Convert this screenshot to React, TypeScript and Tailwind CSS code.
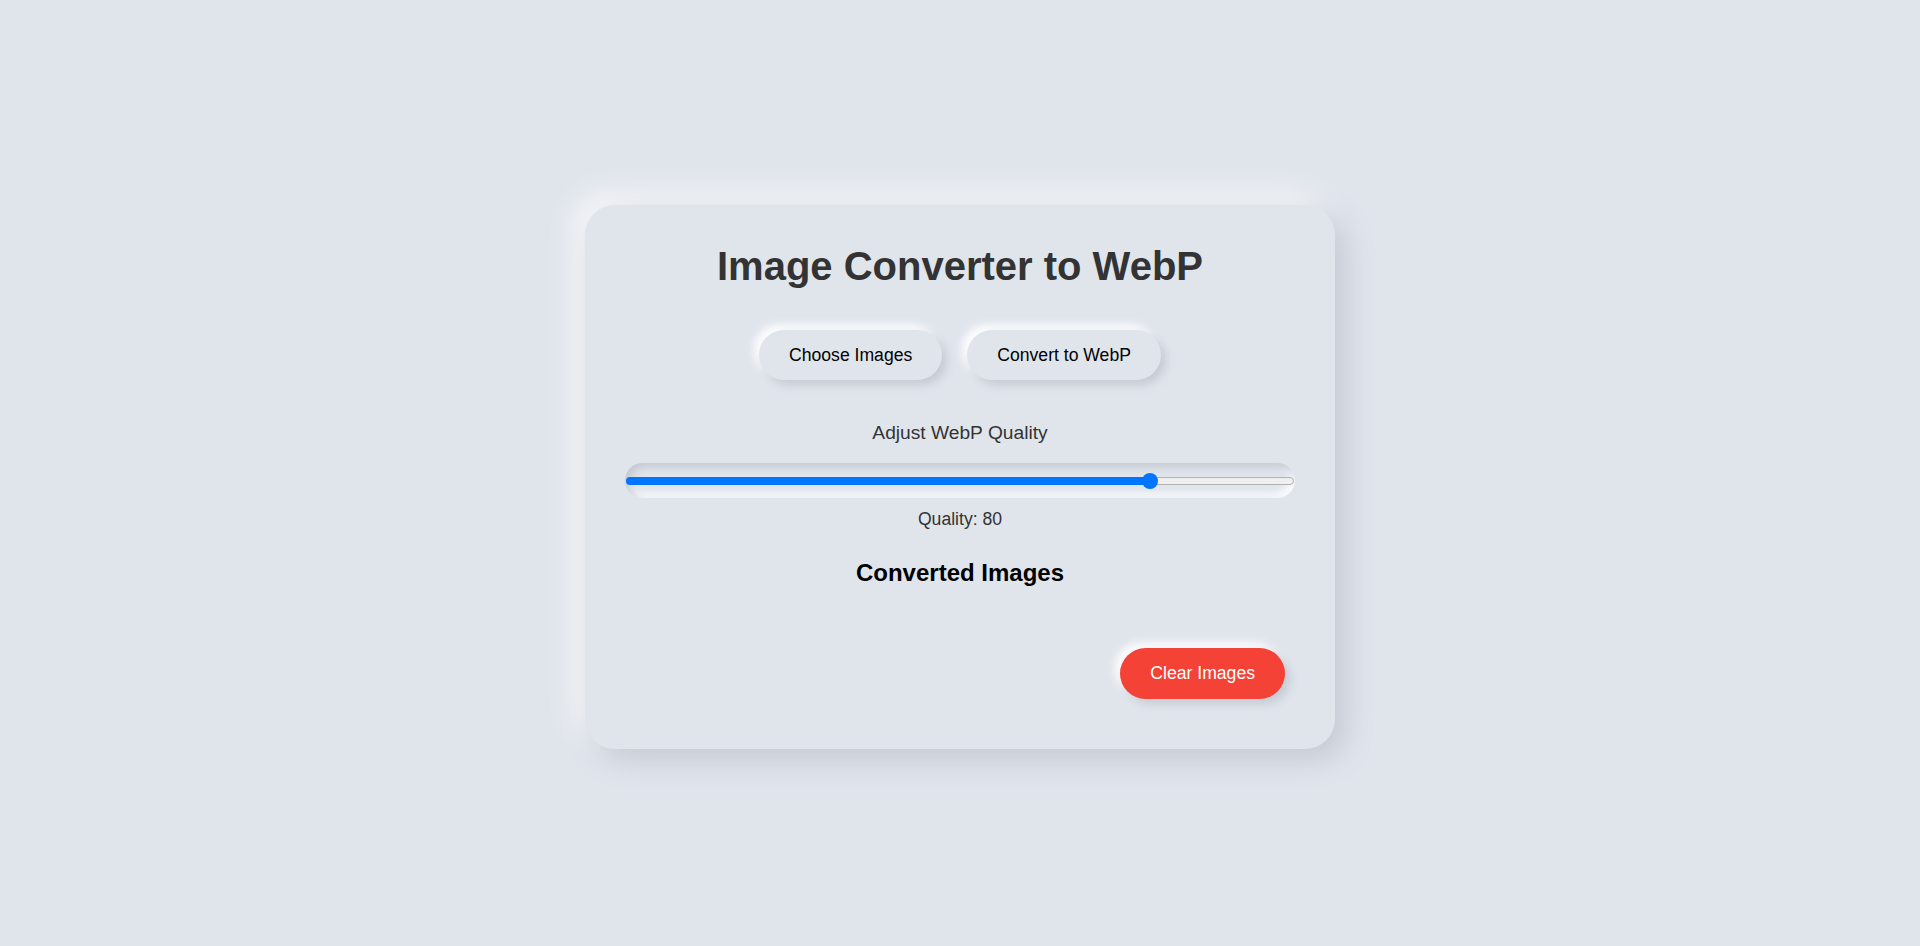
import { useState } from "react";

const App = () => {
  const [quality] = useState(80);

  return (
    <div className="min-h-screen w-full flex items-center justify-center bg-[#e0e5ec] font-['Liberation_Sans',Arial,sans-serif]">
      <div className="mt-[8px] w-[750px] rounded-[30px] bg-[#e0e5ec] px-[40px] pt-[40px] pb-[40px] text-center shadow-[10px_10px_30px_#c3c8d1,-10px_-10px_30px_rgba(255,255,255,0.85)]">
        {/* Title */}
        <h1 className="text-[40px] leading-[42px] font-bold text-[#333]">
          Image Converter to WebP
        </h1>

        {/* Action buttons */}
        <div className="mt-[43px] flex justify-center gap-[25px]">
          <button className="h-[50px] rounded-full bg-[#e0e5ec] px-[30px] text-[17.6px] text-black shadow-[5px_5px_10px_#c6cbd3,-5px_-5px_10px_#ffffff]">
            Choose Images
          </button>
          <button className="h-[50px] rounded-full bg-[#e0e5ec] px-[30px] text-[17.6px] text-black shadow-[5px_5px_10px_#c6cbd3,-5px_-5px_10px_#ffffff]">
            Convert to WebP
          </button>
        </div>

        {/* Quality */}
        <p className="mt-[43px] text-[19.2px] leading-[20px] text-[#333]">
          Adjust WebP Quality
        </p>
        <div className="relative mt-[20px] h-[35px] rounded-full bg-[#e0e5ec] shadow-[inset_4px_4px_8px_#c3c8d1,inset_-4px_-4px_8px_#ffffff]">
          <div className="absolute left-[1px] right-[1px] top-1/2 flex h-[8px] -translate-y-1/2">
            <div
              className="h-full rounded-l-full bg-[#0075ff]"
              style={{ width: `calc(${quality}% - 12px)` }}
            />
            <div className="h-full flex-1 rounded-r-full border border-[#b2b2b2] bg-[#efefef]" />
          </div>
          <div
            className="absolute top-1/2 h-[16px] w-[16px] -translate-y-1/2 rounded-full bg-[#0075ff]"
            style={{ left: `calc(${quality}% - 19px)` }}
          />
        </div>
        <p className="mt-[12px] text-[17.6px] leading-[18px] text-[#333]">
          Quality: {quality}
        </p>

        {/* Converted images */}
        <h2 className="mt-[32px] text-[24px] leading-[26px] font-bold text-black">
          Converted Images
        </h2>
        <div className="grid grid-cols-3 gap-4" />

        <div className="mt-[62px] mb-[10px] mr-[10px] flex justify-end">
          <button className="h-[51px] rounded-full bg-[#f44336] px-[30px] text-[17.6px] text-white shadow-[5px_5px_10px_#c6cbd3,-5px_-5px_10px_#ffffff]">
            Clear Images
          </button>
        </div>
      </div>
    </div>
  );
};

export default App;
